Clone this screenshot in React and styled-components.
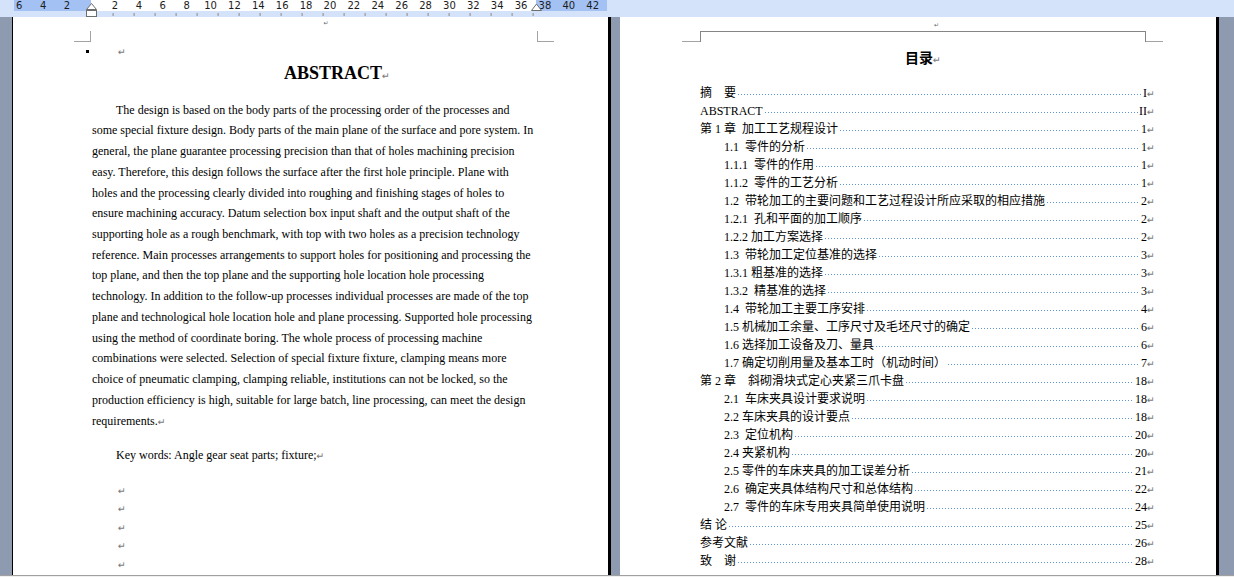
import React from 'react';
import styled, { createGlobalStyle } from 'styled-components';

const GlobalStyle = createGlobalStyle`
  html, body {
    margin: 0;
    padding: 0;
  }
  body {
    width: 1234px;
    height: 577px;
    overflow: hidden;
    background: #8e9ab0;
    font-family: "Liberation Serif", "Noto Sans CJK SC", serif;
    color: #000;
  }
`;

const Window = styled.div`
  width: 1234px;
  height: 577px;
  display: flex;
  flex-direction: column;
  overflow: hidden;
`;

/* ---------- ruler ---------- */

const Ruler = styled.div`
  position: relative;
  flex: none;
  height: 17px;
  background: #d5e3fa;
  display: flex;
  flex-direction: column;
`;

const NumberRow = styled.div`
  height: 11px;
  display: flex;
  padding-left: 14px;
`;

const Zone = styled.div`
  flex: none;
  width: ${p => p.w}px;
  height: 11px;
  display: flex;
  justify-content: ${p => (p.end ? 'flex-end' : 'flex-start')};
  padding: 0 ${p => p.pr || 0}px 0 ${p => p.pl || 0}px;
  box-sizing: border-box;
  background: ${p => (p.text ? '#ffffff' : '#a3c1f3')};
`;

const Scale = styled.div`
  display: flex;
  margin-left: ${p => p.shift || 0}px;
`;

const Num = styled.span`
  flex: none;
  width: 23.9px;
  text-align: center;
  font: 10px/11px "DejaVu Sans", sans-serif;
  color: #1c1c1c;
`;

const TickRow = styled.div`
  height: 6px;
  margin-left: 91px;
  width: 445px;
  background-image: linear-gradient(to right, #8a8a8a 1px, transparent 1px);
  background-size: 21px 3px;
  background-position: 21.6px 2px;
  background-repeat: repeat-x;
`;

const Marker = styled.svg`
  position: absolute;
  top: ${p => p.top}px;
  left: ${p => p.left}px;
`;

/* ---------- pages ---------- */

const Desk = styled.div`
  flex: 1;
  display: flex;
  padding-left: 12px;
  gap: 9px;
  min-height: 0;
`;

const Page = styled.div`
  flex: none;
  width: ${p => p.w}px;
  background: #fff;
  border-left: ${p => (p.lead ? '1px solid #000' : 'none')};
  border-right: 3px solid #000;
  padding: 0 ${p => p.pr}px 0 ${p => p.pl}px;
  box-sizing: content-box;
  display: flex;
  flex-direction: column;
  overflow: hidden;
`;

const Header = styled.div`
  height: 25px;
  flex: none;
  display: flex;
  align-items: flex-end;
`;

const Corner = styled.div`
  flex: none;
  width: ${p => p.w}px;
  height: ${p => (p.tall ? 11 : 1)}px;
  box-sizing: border-box;
  border-bottom: 1px solid #a3a3a3;
  border-right: ${p => (p.side === 'left' && p.tall ? '1px solid #a3a3a3' : 'none')};
  border-left: ${p => (p.side === 'right' && p.tall ? '1px solid #a3a3a3' : 'none')};
  margin-left: ${p => (p.side === 'left' ? -p.w : 0)}px;
  margin-right: ${p => (p.side === 'right' ? -p.w : 0)}px;
`;

const HeaderMid = styled.div`
  flex: 1;
  align-self: stretch;
  display: flex;
  justify-content: center;
  padding-left: 24px;
`;

const HeaderBox = styled.div`
  flex: 1;
  height: 11px;
  box-sizing: border-box;
  border: 1px solid #858585;
  border-bottom: none;
  position: relative;
`;

const TinyMark = styled.span`
  font: 6px/6px "DejaVu Sans", sans-serif;
  color: #666;
  margin-top: 3px;
`;

const FloatMark = styled(TinyMark)`
  position: absolute;
  left: 233px;
  top: -13px;
`;

const Ret = styled.span`
  font: 9.5px "DejaVu Sans", sans-serif;
  color: #7a7a7a;
  margin-left: ${p => p.ml || 0}px;
  margin-right: ${p => p.mr || 0}px;
`;

/* page 1 */

const MarkLine = styled.div`
  height: 18px;
  display: flex;
  align-items: center;
`;

const Bullet = styled.span`
  width: 3px;
  height: 3px;
  background: #000;
  margin-left: -5px;
`;

const Title = styled.h1`
  margin: 1px 0 0;
  padding-left: 46px;
  font: bold 18px/24px "Liberation Serif", serif;
  text-align: center;
`;

const Para = styled.div`
  margin-top: ${p => p.mt}px;
  font-size: 12px;
  line-height: 20.73px;
`;

const Line = styled.div`
  white-space: nowrap;
  padding-left: ${p => (p.indent ? 25 : 1)}px;
`;

const Blanks = styled.div`
  margin-top: 15.4px;
`;

const Blank = styled.div`
  height: 18.5px;
  display: flex;
  align-items: center;
  padding-left: 27px;
`;

/* page 2 */

const TocTitle = styled.h2`
  margin: 4px 0 0;
  font: bold 14px/22px "Noto Sans CJK SC", sans-serif;
  text-align: center;
`;

const TocList = styled.div`
  margin-top: 16px;
  display: flex;
  flex-direction: column;
`;

const TocRow = styled.div`
  height: 18px;
  display: flex;
  align-items: center;
  padding-left: ${p => (p.level === 2 ? 24 : 0)}px;
  font-size: 12px;
  line-height: 18px;
`;

const Label = styled.span`
  white-space: pre;
  flex: none;
`;

const Leader = styled.span`
  flex: 1;
  height: 1px;
  margin: 3px 1px 0 2px;
  background-image: linear-gradient(to right, #5f94d4 1px, transparent 1px);
  background-size: 3px 1px;
  background-repeat: repeat-x;
`;

const PageNo = styled.span`
  flex: none;
`;

const BottomBar = styled.div`
  flex: none;
  height: 2px;
  border-top: 1px solid #a0a0a0;
  background: #f0f0f0;
  box-sizing: border-box;
`;

const abstractLines = [
  'The design is based on the body parts of the processing order of the processes and',
  'some special fixture design. Body parts of the main plane of the surface and pore system. In',
  'general, the plane guarantee processing precision than that of holes machining precision',
  'easy. Therefore, this design follows the surface after the first hole principle. Plane with',
  'holes and the processing clearly divided into roughing and finishing stages of holes to',
  'ensure machining accuracy. Datum selection box input shaft and the output shaft of the',
  'supporting hole as a rough benchmark, with top with two holes as a precision technology',
  'reference. Main processes arrangements to support holes for positioning and processing the',
  'top plane, and then the top plane and the supporting hole location hole processing',
  'technology. In addition to the follow-up processes individual processes are made of the top',
  'plane and technological hole location hole and plane processing. Supported hole processing',
  'using the method of coordinate boring. The whole process of processing machine',
  'combinations were selected. Selection of special fixture fixture, clamping means more',
  'choice of pneumatic clamping, clamping reliable, institutions can not be locked, so the',
  'production efficiency is high, suitable for large batch, line processing, can meet the design',
  'requirements.',
];

const toc = [
  { level: 1, label: '摘　要', page: 'I' },
  { level: 1, label: 'ABSTRACT', page: 'II' },
  { level: 1, label: '第 1 章  加工工艺规程设计', page: '1' },
  { level: 2, label: '1.1  零件的分析', page: '1' },
  { level: 2, label: '1.1.1  零件的作用', page: '1' },
  { level: 2, label: '1.1.2  零件的工艺分析', page: '1' },
  { level: 2, label: '1.2  带轮加工的主要问题和工艺过程设计所应采取的相应措施', page: '2' },
  { level: 2, label: '1.2.1  孔和平面的加工顺序', page: '2' },
  { level: 2, label: '1.2.2 加工方案选择', page: '2' },
  { level: 2, label: '1.3  带轮加工定位基准的选择', page: '3' },
  { level: 2, label: '1.3.1 粗基准的选择', page: '3' },
  { level: 2, label: '1.3.2  精基准的选择', page: '3' },
  { level: 2, label: '1.4  带轮加工主要工序安排', page: '4' },
  { level: 2, label: '1.5 机械加工余量、工序尺寸及毛坯尺寸的确定', page: '6' },
  { level: 2, label: '1.6 选择加工设备及刀、量具', page: '6' },
  { level: 2, label: '1.7 确定切削用量及基本工时（机动时间）', page: '7' },
  { level: 1, label: '第 2 章　斜砌滑块式定心夹紧三爪卡盘', page: '18' },
  { level: 2, label: '2.1  车床夹具设计要求说明', page: '18' },
  { level: 2, label: '2.2 车床夹具的设计要点', page: '18' },
  { level: 2, label: '2.3  定位机构', page: '20' },
  { level: 2, label: '2.4 夹紧机构', page: '20' },
  { level: 2, label: '2.5 零件的车床夹具的加工误差分析', page: '21' },
  { level: 2, label: '2.6  确定夹具体结构尺寸和总体结构', page: '22' },
  { level: 2, label: '2.7  零件的车床专用夹具简单使用说明', page: '24' },
  { level: 1, label: '结 论', page: '25' },
  { level: 1, label: '参考文献', page: '26' },
  { level: 1, label: '致　谢', page: '28' },
];

const textScale = [];
for (let i = 2; i <= 36; i += 2) textScale.push(String(i));

export default function App() {
  return (
    <Window>
      <GlobalStyle />
      <Ruler>
        <NumberRow>
          <Zone w={77} end pr={12}>
            <Scale>
              <Num>6</Num>
              <Num>4</Num>
              <Num>2</Num>
            </Scale>
          </Zone>
          <Zone w={445} text pl={12}>
            <Scale>
              {textScale.map(n => (
                <Num key={n}>{n}</Num>
              ))}
            </Scale>
          </Zone>
          <Zone w={71}>
            <Scale shift={-3}>
              <Num>38</Num>
              <Num>40</Num>
              <Num>42</Num>
            </Scale>
          </Zone>
        </NumberRow>
        <TickRow />
        <Marker left={86} top={2} width="11" height="15" viewBox="0 0 11 15">
          <polygon points="0.5,7.5 5.5,1.5 10.5,7.5" fill="#fff" stroke="#6d6d6d" />
          <rect x="0.5" y="8.5" width="10" height="6" fill="#fff" stroke="#6d6d6d" />
        </Marker>
        <Marker left={531} top={3} width="11" height="8" viewBox="0 0 11 8">
          <polygon points="0.5,7.5 5.5,1 10.5,7.5" fill="#fff" stroke="#6d6d6d" />
        </Marker>
      </Ruler>

      <Desk>
        <Page lead w={446} pl={78} pr={71}>
          <Header>
            <Corner side="left" w={17} tall />
            <HeaderMid>
              <TinyMark>↵</TinyMark>
            </HeaderMid>
            <Corner side="right" w={17} tall />
          </Header>
          <MarkLine>
            <Bullet />
            <Ret ml={29}>↵</Ret>
          </MarkLine>
          <Title>
            ABSTRACT<Ret>↵</Ret>
          </Title>
          <Para mt={14.6}>
            {abstractLines.map((l, i) => (
              <Line key={i} indent={i === 0}>
                {l}
                {i === abstractLines.length - 1 && <Ret>↵</Ret>}
              </Line>
            ))}
          </Para>
          <Para mt={13.3}>
            <Line indent>
              Key words: Angle gear seat parts; fixture;<Ret>↵</Ret>
            </Line>
          </Para>
          <Blanks>
            {[0, 1, 2, 3, 4].map(i => (
              <Blank key={i}>
                <Ret>↵</Ret>
              </Blank>
            ))}
          </Blanks>
        </Page>

        <Page w={446} pl={80} pr={70}>
          <Header>
            <Corner side="left" w={18} />
            <HeaderBox>
              <FloatMark>↵</FloatMark>
            </HeaderBox>
            <Corner side="right" w={17} />
          </Header>
          <TocTitle>
            目录<Ret>↵</Ret>
          </TocTitle>
          <TocList>
            {toc.map((e, i) => (
              <TocRow key={i} level={e.level}>
                <Label>{e.label}</Label>
                <Leader />
                <PageNo>{e.page}</PageNo>
                <Ret mr={-9}>↵</Ret>
              </TocRow>
            ))}
          </TocList>
        </Page>
      </Desk>
      <BottomBar />
    </Window>
  );
}
